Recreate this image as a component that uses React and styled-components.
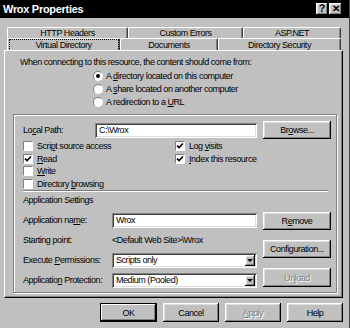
import React from "react";
import styled, { createGlobalStyle, css } from "styled-components";

const FONT = '"Liberation Sans", Arial, sans-serif';

const Global = createGlobalStyle`
  html, body { margin: 0; padding: 0; background: #c0c0c0; }
  * { box-sizing: border-box; }
`;

const raised = css`
  box-shadow: inset -1px -1px 0 #000, inset 1px 1px 0 #fff, inset -2px -2px 0 #808080, inset 2px 2px 0 #dfdfdf;
`;
const sunken = css`
  box-shadow: inset 1px 1px 0 #808080, inset -1px -1px 0 #fff, inset 2px 2px 0 #404040, inset -2px -2px 0 #dfdfdf;
`;

const Dialog = styled.div`
  width: 350px;
  height: 328px;
  background: #c0c0c0;
  font-family: ${FONT};
  font-size: 9px;
  letter-spacing: -0.45px;
  color: #000;
  display: flex;
  flex-direction: column;
  overflow: hidden;
  border-right: 1px solid #404040;
`;

const TitleBar = styled.div`
  height: 18px;
  background: #000;
  display: flex;
  align-items: center;
  padding: 0 7px 0 3px;
  gap: 1px;
`;

const Title = styled.div`
  flex: 1;
  color: #fff;
  font-weight: bold;
  font-size: 11px;
  letter-spacing: -0.3px;
  line-height: 18px;
`;

const TitleButton = styled.div`
  width: ${(p) => p.w}px;
  height: 12px;
  background: #c0c0c0;
  ${raised};
  display: flex;
  align-items: center;
  justify-content: center;
  font-weight: bold;
  font-size: 10px;
  letter-spacing: 0;
  line-height: 1;
`;

const TabStrip = styled.div`
  margin-top: 9px;
  margin-left: 7px;
  width: 334px;
  display: flex;
  flex-direction: column;
`;

const TabRow = styled.div`
  display: flex;
  height: ${(p) => p.h}px;
`;

const Tab = styled.div`
  width: ${(p) => p.w}px;
  border-top: 1px solid #fff;
  border-left: 1px solid #fff;
  border-right: 1px solid #404040;
  box-shadow: inset -1px 0 0 #808080;
  border-top-left-radius: 2px;
  border-top-right-radius: 2px;
  display: flex;
  align-items: center;
  justify-content: center;
  line-height: 10px;
  white-space: nowrap;
`;

const FocusLabel = styled.span`
  outline: 1px dotted #000;
  outline-offset: 0;
  width: 108px;
  height: 10px;
  text-align: center;
`;

const Panel = styled.div`
  margin-left: 4px;
  width: 339px;
  border-top: 1px solid #fff;
  border-left: 1px solid #fff;
  border-right: 1px solid #000;
  border-bottom: 1px solid #000;
  box-shadow: inset -1px -1px 0 #808080;
  padding: 1px;
  display: flex;
  flex-direction: column;
`;

const Intro = styled.div`
  margin: 4px 0 0 14px;
  line-height: 12px;
  white-space: nowrap;
`;

const RadioList = styled.div`
  margin-top: 1px;
  padding-left: 87px;
  display: flex;
  flex-direction: column;
`;

const RadioRow = styled.div`
  height: 13px;
  display: flex;
  align-items: center;
  gap: 3px;
  white-space: nowrap;
`;

const RadioDot = styled.span`
  width: 10px;
  height: 10px;
  border-radius: 50%;
  background: #fff;
  border: 1px solid;
  border-color: #808080 #fff #fff #808080;
  position: relative;
  flex: none;
  &::after {
    content: "";
    display: ${(p) => (p.checked ? "block" : "none")};
    position: absolute;
    left: 2px;
    top: 2px;
    width: 4px;
    height: 4px;
    border-radius: 50%;
    background: #000;
  }
`;

const U = styled.span`
  text-decoration: underline;
`;

const GroupBox = styled.div`
  margin: 6px 4px 3px 7px;
  border: 1px solid #808080;
  box-shadow: 1px 1px 0 #fff, inset 1px 1px 0 #fff;
  padding: 6px 5px 2px 9px;
  display: flex;
  flex-direction: column;
`;

const PathRow = styled.div`
  height: 18px;
  display: flex;
  align-items: center;
`;

const FieldLabel = styled.div`
  width: ${(p) => p.w}px;
  flex: none;
  white-space: nowrap;
`;

const TextBox = styled.div`
  width: ${(p) => p.w}px;
  height: 15px;
  background: #fff;
  ${sunken};
  padding: 0 4px;
  display: flex;
  align-items: center;
  white-space: nowrap;
`;

const Select = styled.div`
  width: ${(p) => p.w}px;
  height: 15px;
  background: #fff;
  ${sunken};
  padding: 2px 2px 2px 4px;
  display: flex;
  align-items: center;
  white-space: nowrap;
`;

const SelectText = styled.span`
  flex: 1;
`;

const DropButton = styled.span`
  width: 10px;
  height: 11px;
  background: #c0c0c0;
  ${raised};
  display: flex;
  align-items: center;
  justify-content: center;
  &::after {
    content: "";
    border-left: 3px solid transparent;
    border-right: 3px solid transparent;
    border-top: 3px solid #000;
  }
`;

const Button = styled.div`
  width: ${(p) => p.w}px;
  height: ${(p) => p.h || 18}px;
  margin-left: ${(p) => p.ml || 0}px;
  background: #c0c0c0;
  ${raised};
  ${(p) =>
    p.$default &&
    css`
      box-shadow: inset 0 0 0 1px #000, inset -2px -2px 0 #000, inset 2px 2px 0 #fff, inset -3px -3px 0 #808080;
    `}
  display: flex;
  align-items: center;
  justify-content: center;
  flex: none;
  white-space: nowrap;
  color: ${(p) => (p.$disabled ? "#808080" : "#000")};
  text-shadow: ${(p) => (p.$disabled ? "1px 1px 0 #fff" : "none")};
`;

const CheckGrid = styled.div`
  margin-top: 1px;
  display: grid;
  grid-template-columns: 152px 1fr;
  grid-template-rows: repeat(4, 12.5px);
  grid-auto-flow: column;
`;

const CheckItem = styled.div`
  display: flex;
  align-items: center;
  gap: 4px;
  white-space: nowrap;
`;

const CheckBoxSquare = styled.span`
  width: 10px;
  height: 10px;
  background: #fff;
  border: 1px solid;
  border-color: #808080 #fff #fff #808080;
  flex: none;
  display: flex;
  align-items: center;
  justify-content: center;
`;

const Separator = styled.div`
  margin-right: 3px;
  border-top: 1px solid #808080;
  border-bottom: 1px solid #fff;
`;

const SectionTitle = styled.div`
  margin-top: 2px;
  line-height: 12px;
`;

const AppSection = styled.div`
  margin-top: 4px;
  display: flex;
`;

const FieldCol = styled.div`
  width: 234px;
  display: flex;
  flex-direction: column;
`;

const FieldRow = styled.div`
  height: 20px;
  display: flex;
  align-items: center;
`;

const ButtonCol = styled.div`
  margin-left: 6px;
  padding-top: 2px;
  display: flex;
  flex-direction: column;
  gap: 10px;
`;

const Footer = styled.div`
  margin-top: 5px;
  padding-left: 100px;
  display: flex;
  gap: 6px;
`;

function Radio({ checked, children }) {
  return (
    <RadioRow>
      <RadioDot checked={checked} />
      <span>{children}</span>
    </RadioRow>
  );
}

function Check({ checked, children }) {
  return (
    <CheckItem>
      <CheckBoxSquare>
        {checked && (
          <svg width="8" height="8" viewBox="0 0 8 8">
            <polyline points="1,3.5 3,5.5 7,1.5" fill="none" stroke="#000" strokeWidth="1.6" />
          </svg>
        )}
      </CheckBoxSquare>
      <span>{children}</span>
    </CheckItem>
  );
}

export default function App() {
  return (
    <>
      <Global />
      <Dialog>
        <TitleBar>
          <Title>Wrox Properties</Title>
          <TitleButton w={12}>?</TitleButton>
          <TitleButton w={13}>✕</TitleButton>
        </TitleBar>

        <TabStrip>
          <TabRow h={11}>
            <Tab w={121}>HTTP Headers</Tab>
            <Tab w={115}>Custom Errors</Tab>
            <Tab w={98}>ASP.NET</Tab>
          </TabRow>
          <TabRow h={12}>
            <Tab w={113}>
              <FocusLabel>Virtual Directory</FocusLabel>
            </Tab>
            <Tab w={98}>Documents</Tab>
            <Tab w={123}>Directory Security</Tab>
          </TabRow>
        </TabStrip>

        <Panel>
          <Intro>When connecting to this resource, the content should come from:</Intro>
          <RadioList>
            <Radio checked>
              A <U>d</U>irectory located on this computer
            </Radio>
            <Radio>
              A <U>s</U>hare located on another computer
            </Radio>
            <Radio>
              A redirection to a <U>U</U>RL
            </Radio>
          </RadioList>

          <GroupBox>
            <PathRow>
              <FieldLabel w={72}>
                Lo<U>c</U>al Path:
              </FieldLabel>
              <TextBox w={162}>C:\Wrox</TextBox>
              <Button w={68} ml={6}>
                Br<U>o</U>wse...
              </Button>
            </PathRow>

            <CheckGrid>
              <Check>
                Scri<U>p</U>t source access
              </Check>
              <Check checked>
                <U>R</U>ead
              </Check>
              <Check>
                <U>W</U>rite
              </Check>
              <Check>
                Directory <U>b</U>rowsing
              </Check>
              <Check checked>
                Log <U>v</U>isits
              </Check>
              <Check checked>
                <U>I</U>ndex this resource
              </Check>
            </CheckGrid>

            <Separator />
            <SectionTitle>Application Settings</SectionTitle>

            <AppSection>
              <FieldCol>
                <FieldRow>
                  <FieldLabel w={89}>
                    Application na<U>m</U>e:
                  </FieldLabel>
                  <TextBox w={145}>Wrox</TextBox>
                </FieldRow>
                <FieldRow>
                  <FieldLabel w={89}>Starting point:</FieldLabel>
                  <span>&lt;Default Web Site&gt;\Wrox</span>
                </FieldRow>
                <FieldRow>
                  <FieldLabel w={89}>
                    Execute <U>P</U>ermissions:
                  </FieldLabel>
                  <Select w={145}>
                    <SelectText>Scripts only</SelectText>
                    <DropButton />
                  </Select>
                </FieldRow>
                <FieldRow>
                  <FieldLabel w={89}>
                    Applicatio<U>n</U> Protection:
                  </FieldLabel>
                  <Select w={145}>
                    <SelectText>Medium (Pooled)</SelectText>
                    <DropButton />
                  </Select>
                </FieldRow>
              </FieldCol>
              <ButtonCol>
                <Button w={68}>
                  R<U>e</U>move
                </Button>
                <Button w={68}>
                  Confi<U>g</U>uration...
                </Button>
                <Button w={68} h={19} $disabled>
                  Un<U>l</U>oad
                </Button>
              </ButtonCol>
            </AppSection>
          </GroupBox>
        </Panel>

        <Footer>
          <Button w={57} h={19} $default>
            OK
          </Button>
          <Button w={56} h={19}>
            Cancel
          </Button>
          <Button w={56} h={19} $disabled>
            <U>A</U>pply
          </Button>
          <Button w={56} h={19}>
            Help
          </Button>
        </Footer>
      </Dialog>
    </>
  );
}
